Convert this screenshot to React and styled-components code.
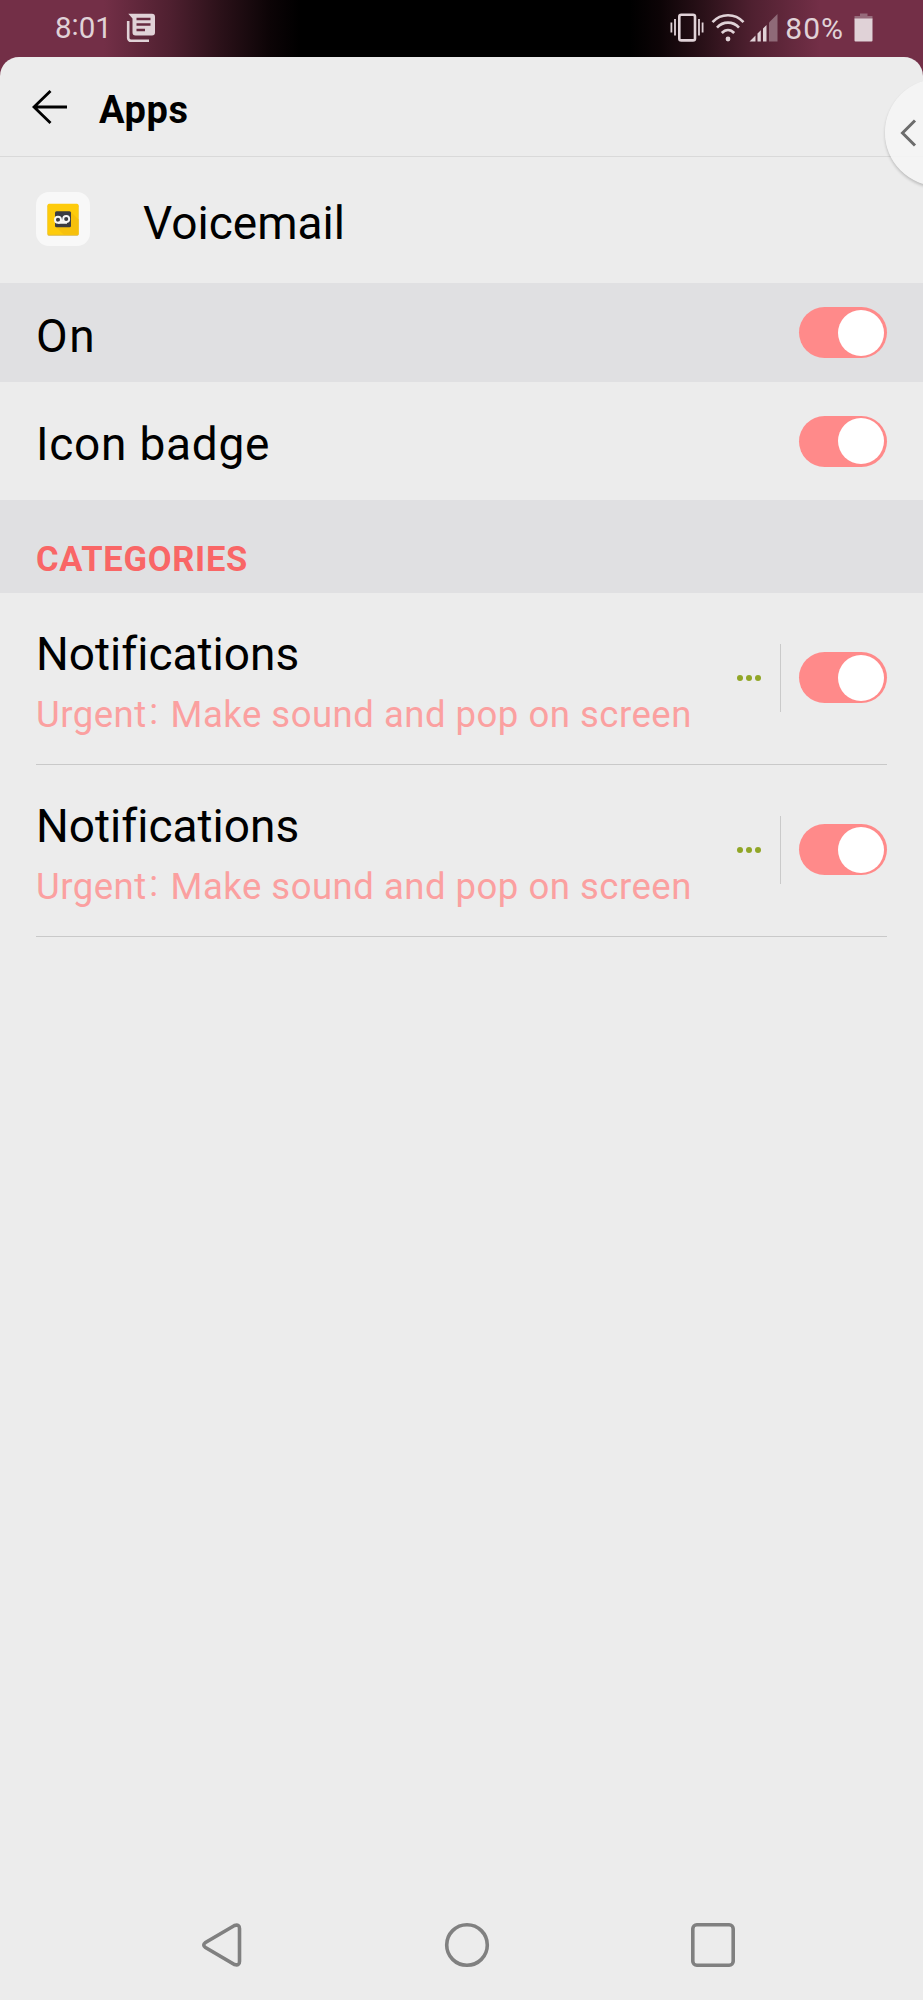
import React from "react";
import styled, { createGlobalStyle } from "styled-components";

const GlobalStyle = createGlobalStyle`
  *, *::before, *::after { box-sizing: border-box; }
  body {
    margin: 0;
    background: #732f47;
    font-family: Roboto, sans-serif;
    font-variant-ligatures: none;
  }
`;

const Screen = styled.div`
  display: flex;
  flex-direction: column;
  width: 923px;
  height: 2000px;
  overflow: hidden;
  background: linear-gradient(
    90deg,
    #732f47 0, #732f47 104px, #4f2030 170px, #2b1119 220px, #0c0406 270px, #000 300px,
    #000 630px, #0c0406 660px, #2b1119 705px, #4f2030 752px, #732f47 820px, #732f47 100%
  );
`;

const StatusBar = styled.header`
  display: flex;
  justify-content: space-between;
  height: 57px;
  padding: 0 50px 0 55px;
  color: #e0d2d7;
`;

const StatusGroup = styled.div`
  display: flex;
  align-items: center;
  height: 56px;
`;

const StatusText = styled.span`
  font-size: ${(p) => p.$size || "29.5px"};
  line-height: 57px;
  letter-spacing: ${(p) => p.$spacing || "0"};
  margin: 0 ${(p) => p.$right || "0"} 0 ${(p) => p.$left || "0"};
`;

const RaisedColon = styled.span`
  position: relative;
  top: -3px;
  margin: 0 ${(p) => p.$space || "0"};
`;

const Icon = styled.svg`
  display: block;
  flex: none;
  margin-right: ${(p) => p.$gap || "0"};
`;

const Panel = styled.main`
  position: relative;
  flex: 1;
  display: flex;
  flex-direction: column;
  background: #ececec;
  border-radius: 19px 19px 0 0;
  overflow: hidden;
`;

const TitleBar = styled.div`
  display: flex;
  align-items: center;
  height: 100px;
  padding-left: 32px;
  border-bottom: 1px solid #d9d9d9;
`;

const Title = styled.h1`
  margin: 7px 0 0 31px;
  font-size: 38px;
  line-height: 48px;
  font-weight: 700;
  letter-spacing: 0.6px;
  color: #000;
`;

const EdgeHandle = styled.button`
  position: absolute;
  top: 22px;
  right: -69px;
  width: 107px;
  height: 107px;
  padding: 0 0 0 15px;
  border: 0;
  border-radius: 50%;
  background: rgba(246, 246, 246, 0.85);
  box-shadow: 0 2px 3px rgba(0, 0, 0, 0.2);
`;

const AppRow = styled.div`
  display: flex;
  align-items: center;
  height: 126px;
  padding: 0 36px 2px;
  gap: 53px;
`;

const SettingRow = styled.div`
  display: flex;
  align-items: center;
  justify-content: space-between;
  height: ${(p) => p.$height};
  padding: 0 36px;
  background: ${(p) => (p.$shaded ? "#e0e0e2" : "transparent")};
`;

const Label = styled.span`
  padding-top: ${(p) => p.$drop || "0"};
  font-size: 46px;
  line-height: 54px;
  letter-spacing: ${(p) => p.$spacing || "0"};
  color: #000;
`;

const SectionHeading = styled.h2`
  height: 93px;
  margin: 0;
  padding: 34px 36px 0;
  background: #e0e0e2;
  font-size: 34.5px;
  line-height: 50px;
  font-weight: 700;
  letter-spacing: 0.75px;
  color: #f96666;
`;

const CategoryRow = styled.div`
  display: flex;
  align-items: flex-start;
  height: 172px;
  margin: 0 36px;
  border-bottom: 1px solid #c9c9c9;
`;

const CategoryText = styled.div`
  flex: 1;
  display: flex;
  flex-direction: column;
  padding-top: 34px;
`;

const Detail = styled.span`
  margin-top: 12px;
  font-size: 36.5px;
  line-height: 44px;
  letter-spacing: 0.5px;
  white-space: nowrap;
  color: #fba0a0;
`;

const CategoryControls = styled.div`
  display: flex;
  align-items: center;
  height: 169px;
`;

const Dots = styled.div`
  display: flex;
  gap: 3.2px;
  margin-right: 19px;
`;

const Dot = styled.i`
  width: 6px;
  height: 6px;
  border-radius: 50%;
  background: #91a627;
`;

const Divider = styled.div`
  width: 1px;
  height: 68px;
  margin-right: 18px;
  background: #cacaca;
`;

const Track = styled.button`
  display: flex;
  align-items: center;
  justify-content: flex-end;
  width: 88px;
  height: 51px;
  padding: 0 3px;
  border: 0;
  border-radius: 26px;
  background: #ff8a8a;
`;

const Knob = styled.span`
  width: 46px;
  height: 46px;
  border-radius: 50%;
  background: #fff;
`;

const NavBar = styled.nav`
  display: flex;
  justify-content: space-between;
  align-items: center;
  height: 110px;
  margin-top: auto;
  padding: 0 187px 0 201px;
`;

const Toggle = () => (
  <Track type="button" role="switch" aria-checked="true">
    <Knob />
  </Track>
);

const Category = ({ name, detail }) => (
  <CategoryRow>
    <CategoryText>
      <Label>{name}</Label>
      <Detail>
        Urgent<RaisedColon $space="2.5px">:</RaisedColon> {detail}
      </Detail>
    </CategoryText>
    <CategoryControls>
      <Dots><Dot /><Dot /><Dot /></Dots>
      <Divider />
      <Toggle />
    </CategoryControls>
  </CategoryRow>
);

const NewsIcon = () => (
  <Icon width="30" height="30" viewBox="0 0 30 30">
    <path d="M2.2 8V25a2.8 2.8 0 0 0 2.8 2.8H23" fill="none" stroke="#e0d2d7" strokeWidth="2.6" />
    <path d="M2.3 0.7H26a3 3 0 0 1 3 3V19.5a3 3 0 0 1-3 3H9.5a3 3 0 0 1-3-3V5.5Z" fill="#e0d2d7" />
    <path d="M10.5 6H24.5M10.5 11.5H24.5M10.5 17H19" stroke="#66293f" strokeWidth="2.3" />
  </Icon>
);

const VibrateIcon = () => (
  <Icon $gap="7px" width="34" height="30" viewBox="0 0 34 30">
    <rect x="9.3" y="1.8" width="15.7" height="25.6" rx="2" fill="none" stroke="currentColor" strokeWidth="2.6" />
    <path d="M1.4 9.5V19.5M5 6V22.5M29 6V22.5M32.6 9.5V19.5" stroke="currentColor" strokeWidth="1.8" />
  </Icon>
);

const WifiIcon = () => (
  <Icon $gap="4px" width="34" height="30" viewBox="0 0 34 30">
    <g fill="none" stroke="currentColor" strokeWidth="2.6">
      <path d="M1.5 9.2C10 0 24 0 32.5 9.2" />
      <path d="M6 14.6C12 8 22 8 28 14.6" />
      <path d="M10.8 20C14.5 16 19.5 16 23.2 20" />
    </g>
    <circle cx="17" cy="26" r="2.4" fill="currentColor" />
  </Icon>
);

const SignalIcon = () => (
  <Icon width="29" height="30" viewBox="0 0 29 30">
    <path d="M20 9.5 28.5 1V28.5H20Z" fill="#8f6a78" />
    <path d="M0.5 28.5 6.5 22.5V28.5ZM8.5 20.5 11.8 17.2V28.5H8.5ZM14 15.5 17.5 12V28.5H14Z" fill="currentColor" />
  </Icon>
);

const BatteryIcon = () => (
  <Icon width="19" height="30" viewBox="0 0 19 30">
    <path d="M6 .5H13.5V3H18.5V6.5H.5V3H6Z" fill="#966b7b" />
    <path d="M.5 5.5H18.5V27.5A1 1 0 0 1 17.5 28.5H1.5A1 1 0 0 1 .5 27.5Z" fill="currentColor" />
  </Icon>
);

const BackArrow = () => (
  <Icon width="36" height="36" viewBox="0 0 36 36">
    <path d="M35 18H2M18.5 2 2 18 18.5 34" fill="none" stroke="#000" strokeWidth="2.8" />
  </Icon>
);

const VoicemailIcon = () => (
  <Icon width="54" height="54" viewBox="0 0 54 54">
    <rect width="54" height="54" rx="13" fill="#f8f8f8" />
    <rect x="11.5" y="12.7" width="31" height="31" rx="1.5" fill="#d9b43c" />
    <rect x="11.5" y="11.8" width="31" height="31" rx="1.5" fill="#fecb0b" />
    <path d="M20 35 35 20 42.5 27.5V42.8H27.8Z" fill="#f6c00c" />
    <rect x="19" y="19.3" width="16" height="16" rx="1.5" fill="#3b3c42" />
    <g fill="none" stroke="#f7f7f7" strokeWidth="1.9">
      <circle cx="22" cy="27.8" r="3" />
      <circle cx="30.2" cy="27" r="3" />
      <path d="M22 30.8H31M26 27.5V30.5" />
    </g>
  </Icon>
);

export default function App() {
  return (
    <Screen>
      <GlobalStyle />
      <StatusBar>
        <StatusGroup>
          <StatusText $right="14px">8<RaisedColon>:</RaisedColon>01</StatusText>
          <NewsIcon />
        </StatusGroup>
        <StatusGroup>
          <VibrateIcon />
          <WifiIcon />
          <SignalIcon />
          <StatusText $size="30px" $left="7.5px" $right="10px" $spacing="1px">80%</StatusText>
          <BatteryIcon />
        </StatusGroup>
      </StatusBar>
      <Panel>
        <TitleBar>
          <BackArrow />
          <Title>Apps</Title>
        </TitleBar>
        <AppRow>
          <VoicemailIcon />
          <Label $drop="8px">Voicemail</Label>
        </AppRow>
        <SettingRow $height="99px" $shaded>
          <Label $drop="6px" $spacing="1.5px">On</Label>
          <Toggle />
        </SettingRow>
        <SettingRow $height="118px">
          <Label $drop="6px" $spacing="0.75px">Icon badge</Label>
          <Toggle />
        </SettingRow>
        <SectionHeading>CATEGORIES</SectionHeading>
        <Category name="Notifications" detail="Make sound and pop on screen" />
        <Category name="Notifications" detail="Make sound and pop on screen" />
        <NavBar>
          <Icon width="42" height="46" viewBox="0 0 42 46">
            <path d="M33.5 3.5 4.5 20.5Q1 23 4.5 25.5L33.5 42.5Q38.5 44 38.5 39.5V6.5Q38.5 2 33.5 3.5Z" fill="none" stroke="#808080" strokeWidth="3.6" />
          </Icon>
          <Icon width="46" height="46" viewBox="0 0 46 46">
            <circle cx="23" cy="23" r="20.3" fill="none" stroke="#808080" strokeWidth="3.6" />
          </Icon>
          <Icon width="46" height="46" viewBox="0 0 46 46">
            <rect x="2.8" y="2.8" width="40.4" height="40.4" rx="4" fill="none" stroke="#808080" strokeWidth="3.6" />
          </Icon>
        </NavBar>
        <EdgeHandle type="button" aria-label="Open panel">
          <Icon width="17" height="30" viewBox="0 0 17 30">
            <path d="M15 2.5 2.5 15 15 27.5" fill="none" stroke="#6c6c6c" strokeWidth="3" />
          </Icon>
        </EdgeHandle>
      </Panel>
    </Screen>
  );
}
